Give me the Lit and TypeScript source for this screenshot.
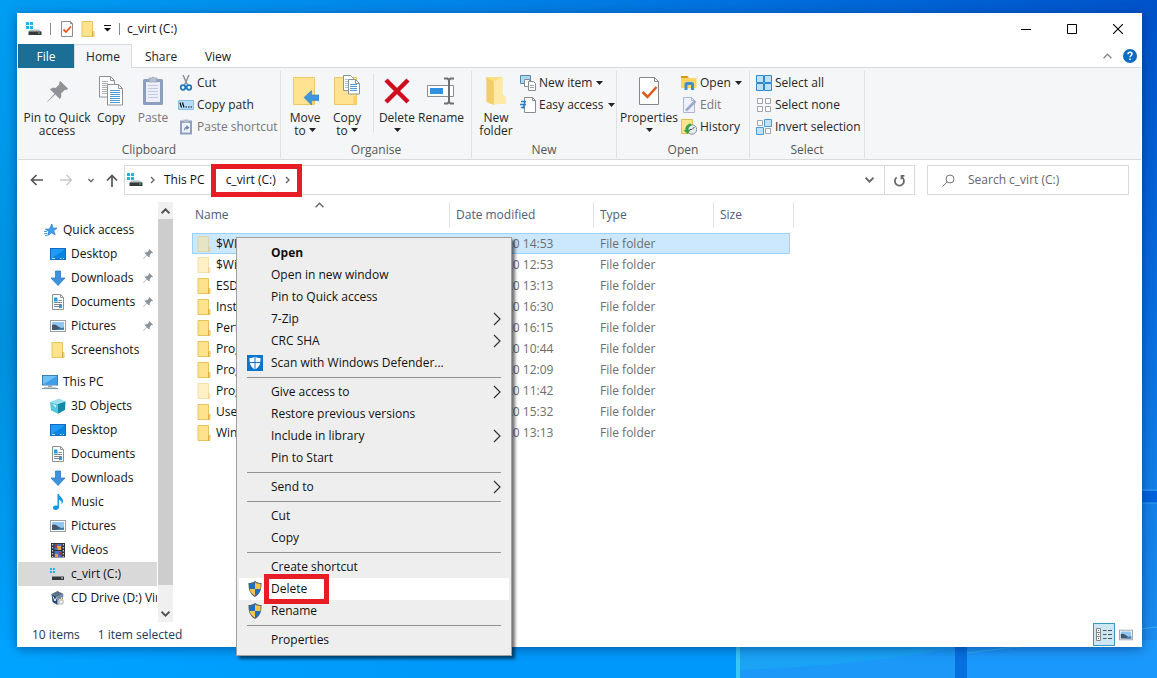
import { LitElement, html, css, svg, nothing, TemplateResult } from "lit";
import { customElement, property } from "lit/decorators.js";
import { classMap } from "lit/directives/class-map.js";

const winDots = (x: number, y: number, s: number) => svg`
  <path fill="#1fb3e6" d="M${x} ${y}h${s}v${s}h-${s}zM${x + s + 1} ${y}h${s}v${s}h-${s}zM${x} ${y + s + 1}h${s}v${s}h-${s}zM${x + s + 1} ${y + s + 1}h${s}v${s}h-${s}z"/>`;

const folderShape = svg`
  <path d="M2 .5h10.500v10H14v5H2z" fill="#ffe38c" stroke="#e8c35c"/>
  <path d="M12.500 10.500v5" stroke="#d9ab3c"/>`;

const pinShape = svg`<path d="M9.800 1.200 14.800 6.200 13.600 7 12.700 6.800 10.300 9.200C10.700 10.800 10.300 12 9.500 12.800L6.600 9.900 2 14.300 1.300 14.700 1.700 14 6.100 9.400 3.200 6.500C4 5.700 5.200 5.300 6.800 5.700L9.200 3.300 9 2.400z"/>`;

const sheetText = (x: number, y: number, w: number, n: number, c: string) =>
  svg`${Array.from({ length: n }, (_, i) => svg`<path d="M${x} ${y + i * 2}h${w}" stroke=${c}/>`)}`;

const desktopShape = svg`
  <rect x=".5" y="2.500" width="15" height="11" fill="#1e9bf2" stroke="#0f6cbd"/>
  <path d="M1 13 15 3v10z" fill="#0a84e0"/><path d="M2 12.500h3M10 12.500h1.500M13 12.500h1" stroke="#bfe3ff"/>`;

const icons: Record<string, { box: string; art: TemplateResult<2> }> = {
  drive: {
    box: "0 0 16 16",
    art: svg`${winDots(0, 1, 3)}
      <path d="M4 8.500h9l2.500 2.500H2.500z" fill="#b9bdc0"/><path d="M2.500 10.500h13v3.500h-13z" fill="#34393d"/>
      <path d="M12 12h2" stroke="#49d06c"/>`,
  },
  driveDark: {
    box: "0 0 16 16",
    art: svg`${winDots(0, 2, 2)}<path d="M2 10.500h12v3.500H2z" fill="#34393d"/><path d="M11 12h2" stroke="#dfe3e5"/>`,
  },
  check: {
    box: "0 0 14 16",
    art: svg`<path d="M1.500.5h9l2 2v13h-11z" fill="#fff" stroke="#8c8c8c"/><path d="M10.500.5v2h2" fill="none" stroke="#8c8c8c"/>
      <path d="M3.500 8.500 6 11l5-5.500" fill="none" stroke="#e2581b" stroke-width="1.800"/>`,
  },
  folder: { box: "0 0 16 16", art: folderShape },
  caret: { box: "0 0 7 4", art: svg`<path d="M0 0h7L3.500 4z" fill="#222"/>` },
  customize: { box: "0 0 7 7", art: svg`<path d="M0 .5h7" stroke="#111"/><path d="M0 3h7L3.500 6.500z" fill="#111"/>` },
  min: { box: "0 0 10 10", art: svg`<path d="M0 5.500h10" stroke="#000"/>` },
  max: { box: "0 0 10 10", art: svg`<path d="M.5.5h9v9h-9z" fill="none" stroke="#000"/>` },
  close: { box: "0 0 10 10", art: svg`<path d="M0 0l10 10M10 0 0 10" stroke="#000" stroke-width="1.100"/>` },
  chevUp: { box: "0 0 8 5", art: svg`<path d="M.5 4.500 4 1l3.500 3.500" fill="none" stroke="currentColor" stroke-width="1.200"/>` },
  chevDown: { box: "0 0 8 5", art: svg`<path d="M.5.5 4 4 7.500.5" fill="none" stroke="currentColor" stroke-width="1.600"/>` },
  scrollUp: { box: "0 0 8 5", art: svg`<path d="M.5 4.500 4 1l3.500 3.500" fill="none" stroke="currentColor" stroke-width="1.800"/>` },
  chevRight: { box: "0 0 5 8", art: svg`<path d="M1 1l3 3-3 3" fill="none" stroke="currentColor" stroke-width="1.400"/>` },
  subMenu: { box: "0 0 8 14", art: svg`<path d="M1 1l6 6-6 6" fill="none" stroke="#333" stroke-width="1.200"/>` },
  help: {
    box: "0 0 14 14",
    art: svg`<circle cx="7" cy="7" r="7" fill="#0b6cc4"/><path d="M5 5.300C5 3.800 6 3.300 7 3.300s2 .6 2 1.700C9 6.500 7 6.500 7 8.300" fill="none" stroke="#fff" stroke-width="1.500"/><path d="M6.200 9.500h1.600v1.500H6.200z" fill="#fff"/>`,
  },
  pin: { box: "0 0 16 16", art: svg`<g fill="#8f9499">${pinShape}</g>` },
  star: {
    box: "0 0 16 16",
    art: svg`<path d="M9.800 2 11 6.200l4-.2-3.300 2.800 1.500 4.200-3.700-2.300L5.800 13.500l1-4L3.500 7.200l4-.2z" fill="#3f9fe8" stroke="#1d78c9" stroke-width=".7"/>
      <path d="M2 9.500h3M2 11.500h3.500M3 13.500h2.500" stroke="#3f9fe8"/>`,
  },
  desktop: { box: "0 0 16 16", art: desktopShape },
  downloads: { box: "0 0 16 16", art: svg`<path d="M5.500 1h5v7h4.500l-7 7.500L1 8h4.500z" fill="#3f93dc" stroke="#2b7cc6" stroke-width=".8"/>` },
  documents: {
    box: "0 0 16 16",
    art: svg`<path d="M2.500.5h8l3 3v12h-11z" fill="#fff" stroke="#8b9094"/><path d="M10.500.5v3h3" fill="none" stroke="#8b9094"/>
      <path d="M4 8.500h8M4 10.500h8M4 12.500h8M8.500 6.500H12" stroke="#7c8a94"/><path d="M4 3.500h3.500v4H4zM9 11h3v3H9z" fill="#2f97dd"/>`,
  },
  pictures: {
    box: "0 0 16 16",
    art: svg`<rect x=".5" y="2.500" width="15" height="11" fill="#fff" stroke="#9a9ea2"/><path d="M2 4h12v8H2z" fill="#8fc7f0"/>
      <path d="M2 7c3-1.500 5 .5 7 2s4 1 5 .5V12H2z" fill="#40596e"/><path d="M7 12c2-2 5-2 7-1.500V12z" fill="#3f86c0"/>`,
  },
  pc: {
    box: "0 0 16 16",
    art: svg`<rect x=".5" y="1.500" width="15" height="9.500" fill="#6fc0f5" stroke="#3c7fb4"/><path d="M1 10.500 15 2v8.500z" fill="#3fa0e8"/>
      <path d="M6 11.500h4v1.500H6z" fill="#9aa5ad"/><path d="M0 14.500h16" stroke="#7a99ad"/><path d="M2 13.500h12" stroke="#c4ced5"/>`,
  },
  cube: {
    box: "0 0 16 16",
    art: svg`<path d="M0 4 9 .5l6.500 3L8 6z" fill="#9be0ee"/><path d="M0 4l8 2v9.800L1 12.500z" fill="#58c6dc"/><path d="M8 6l7.500-2.500-.5 8.500-7 3.800z" fill="#1389a8"/>
      <path d="M2 6l4 1v3z" fill="#c9f1f7"/>`,
  },
  music: { box: "0 0 16 16", art: svg`<path d="M7.500 0h1.500c.3 3 4 3.500 4 7 0 1.500-.7 2.600-1.500 3.500.8-3-.8-4.200-2.500-4.700V13c0 1.700-1.500 3-3.300 3S3 15 3 13.700C3 12 5.500 11 7.500 12z" fill="#1795e0"/>` },
  videos: {
    box: "0 0 16 16",
    art: svg`<path d="M1 1h14v14.500H1z" fill="#2d3238"/><path d="M4.500 2h7v6h-7z" fill="#4a72c9"/><path d="M4.500 9h7v6h-7z" fill="#4a72c9"/>
      <path d="M7 4h4v4H8zM5 12h3v3H5z" fill="#e5a53d"/><path d="M5 2h2v4H5zM9 10h2v3H9z" fill="#a43a3a"/>
      <path d="M2.700 2v13M13.300 2v13" stroke="#e9edf0" stroke-dasharray="1.500 1.500"/>`,
  },
  vbox: {
    box: "0 0 16 16",
    art: svg`<path d="M1.500 4 7.500 1l6 3-6 3z" fill="#5b6f86"/><path d="M1.500 4l6 3v8L2.500 12z" fill="#2a4a7c"/><path d="M13.500 4 7.500 7v8l5-3z" fill="#7188a6"/>
      <path d="M3 6.500 5 11l1.500-3.500" fill="none" stroke="#fff"/><path d="M9 8.500l1.500 3 1.500-4.500" fill="none" stroke="#dfe8f2"/><circle cx="11" cy="12" r="3" fill="#c9ced3"/><circle cx="11" cy="12" r="1" fill="#fff"/><path d="M10 9.500 13 9v2z" fill="#f0c646"/>`,
  },
  back: { box: "0 0 14 12", art: svg`<path d="M6.500 1l-5 5 5 5M1.500 6H13" fill="none" stroke="currentColor" stroke-width="1.700"/>` },
  forward: { box: "0 0 14 12", art: svg`<path d="M7.500 1l5 5-5 5M12.500 6H1" fill="none" stroke="currentColor" stroke-width="1.400"/>` },
  up: { box: "0 0 12 13", art: svg`<path d="M1 6.500l5-5 5 5M6 1.500V13" fill="none" stroke="currentColor" stroke-width="1.700"/>` },
  refresh: { box: "0 0 12 12", art: svg`<path d="M8.300 3A4.200 4.200 0 1 1 3.400 3.100" fill="none" stroke="#666" stroke-width="1.600"/><path d="M3 .5 3.500 4H7" fill="none" stroke="#666" stroke-width="0"/><path d="M10.500 1.700H7.800v3.200" fill="none" stroke="#666" stroke-width="1.500"/>` },
  search: { box: "0 0 13 13", art: svg`<circle cx="8" cy="5" r="4" fill="none" stroke="#777"/><path d="M5.200 7.900.5 12.500" stroke="#777"/>` },
  bigPin: { box: "0 0 16 16", art: svg`<g fill="#8f9397">${pinShape}</g>` },
  bigCopy: {
    box: "0 0 26 30",
    art: svg`<path d="M1.500.5h11l4 4v16.500h-15z" fill="#fff" stroke="#8e9296"/><path d="M12.500.5v4h4" fill="none" stroke="#8e9296"/>
      ${sheetText(4, 5.5, 6, 7, "#aab2b8")}
      <path d="M9.500 8.500h11l4 4v16.500h-15z" fill="#fff" stroke="#8e9296"/><path d="M20.500 8.500v4h4" fill="none" stroke="#8e9296"/>
      ${sheetText(12, 14.5, 10, 7, "#4a9ada")}`,
  },
  bigPaste: {
    box: "0 0 22 30",
    art: svg`<rect x="1" y="3" width="20" height="26" rx="1.500" fill="#8c9dc0"/><path d="M4 6h14v20H4z" fill="#eceff8"/>
      <path d="M7 2h2.500a1.700 1.700 0 0 1 3 0H15v4H7z" fill="#b5bfcd" stroke="#8d99ad" stroke-width=".6"/>
      ${[9.5, 12.5, 15.5, 18.5, 21.5].map((y) => svg`<path d="M6 ${y}h10" stroke="#c3cbe3"/>`)}`,
  },
  cut: {
    box: "0 0 16 16",
    art: svg`<path d="M5 0 9.500 10M11 0 6.500 10" stroke="#8d9398" stroke-width="1.500"/><circle cx="5" cy="12.500" r="2.300" fill="none" stroke="#1976bf" stroke-width="1.700"/><circle cx="11" cy="12.500" r="2.300" fill="none" stroke="#1976bf" stroke-width="1.700"/>`,
  },
  copyPath: {
    box: "0 0 16 16",
    art: svg`<path d="M.5 3.500h15v9H.5z" fill="#b6dcf7" stroke="#87bfe6"/><path d="M2 5.500 3.500 10.500M4.500 5.500 6 10.500" stroke="#111" stroke-width="1.200"/><path d="M7.500 10h1.500M10 10h1.500M12.500 10H14" stroke="#111" stroke-width="1.200"/>`,
  },
  pasteShortcut: {
    box: "0 0 16 16",
    art: svg`<rect x="2" y="1.500" width="12" height="14" fill="#91a0c0"/><path d="M4 4h8v9.500H4z" fill="#eef0f8"/><path d="M5.500.5h5v3h-5z" fill="#b2bccd"/><path d="M6 12c0-3 1-4 2.500-4.500V6l3 2.700L8.500 11V9.500C7.500 9.800 7 10.500 6 12z" fill="#7383aa"/>`,
  },
  moveTo: {
    box: "0 0 28 32",
    art: svg`<path d="M2.500 2.500h21v27h-21z" fill="#ffe390" stroke="#ecc863"/><path d="M21 21v8.500h2.500V21z" fill="#f6cf66"/>
      <path d="M13 22.500 20.500 15.500V20H28v5.500h-7.500V30z" fill="#3f96dd" stroke="#2c80c8" stroke-width=".6"/>`,
  },
  copyTo: {
    box: "0 0 28 32",
    art: svg`<path d="M1.500 2.500h22v27h-22z" fill="#ffe390" stroke="#ecc863"/><path d="M20.500 21v8.500H24V21z" fill="#f6cf66"/>
      <path d="M10.500.5h7l3 3v12h-10z" fill="#fff" stroke="#8e9296"/><path d="M15.500 4.500h7l4 4v10.500h-11z" fill="#fff" stroke="#8e9296"/><path d="M22.500 4.500v4h4" fill="none" stroke="#8e9296"/>
      ${sheetText(12, 4.500, 3, 5, "#9cc6ea")}${sheetText(17, 9.500, 7, 4, "#4a9ada")}`,
  },
  deleteX: { box: "0 0 28 28", art: svg`<path d="M3 3 25 25M25 3 3 25" stroke="#d00d1c" stroke-width="4.500"/>` },
  rename: {
    box: "0 0 28 28",
    art: svg`<path d="M.5 8.500h26v11H.5z" fill="#fff" stroke="#8b8f93"/><path d="M3 11h13v6H3z" fill="#3191df"/>
      <path d="M17 1.500h3.500L22 3l1.500-1.500H27M17 26.500h3.500L22 25l1.500 1.500H27M22 3v22" fill="none" stroke="#6e7275" stroke-width="2"/>`,
  },
  newFolder: {
    box: "0 0 20 28",
    art: svg`<path d="M1 1h15v16l3 3v6H4z" fill="#ffdf86"/><path d="M1 1l7 4v22l-7-3z" fill="#f4cd6b"/><path d="M8 5l8-4v16l3 3v5l-11 2z" fill="#ffe9a6"/>`,
  },
  newItem: {
    box: "0 0 16 16",
    art: svg`<path d="M.5.5h10v8H.5z" fill="#a9d8f5" stroke="#5b86a6"/><path d="M4.500 4.500h5v7h-5z" fill="#fff" stroke="#888c90"/><path d="M8.500 6.500h5l2 2v7h-7z" fill="#fff" stroke="#888c90"/><path d="M10 10.500h4M10 12.500h4" stroke="#9aa"/>`,
  },
  easyAccess: {
    box: "0 0 16 16",
    art: svg`<path d="M4.500.5h8l3 3v12h-11z" fill="#fff" stroke="#888c90"/><path d="M12.500.5v3h3" fill="none" stroke="#888c90"/><path d="M1 4.500h5M0 7.500h6M1 10.500h4M5 4.500l-2 7" stroke="#2b7fc6" stroke-width="1.300"/>`,
  },
  properties: {
    box: "0 0 22 30",
    art: svg`<path d="M1.500 1.500h15l4 4v23h-19z" fill="#fff" stroke="#85898c"/><path d="M16.500 1.500v4h4" fill="none" stroke="#85898c"/><path d="M4.500 16l5 5 9-10" fill="none" stroke="#e2581b" stroke-width="2.500"/>`,
  },
  openFolder: {
    box: "0 0 16 16",
    art: svg`<path d="M0 1h7l1 2h7.500v10H0z" fill="#ffd465"/><path d="M0 1h6.500l1 2H0z" fill="#d59a17"/><path d="M3.500 15V9.500A2.500 2.500 0 0 1 6 7h4.500A2.500 2.500 0 0 1 13 9.500V15h-3v-5H6.500v5z" fill="#3a8fd6"/>`,
  },
  edit: {
    box: "0 0 16 16",
    art: svg`<path d="M2.500.5h8l3 3v12h-11z" fill="#eef1fa" stroke="#aab6d2"/><path d="M10.500.5v3h3" fill="none" stroke="#aab6d2"/><path d="M5 13.500 14.500 4" stroke="#9aa9cb" stroke-width="2.500"/>`,
  },
  history: {
    box: "0 0 16 16",
    art: svg`<path d="M.5.500h11v14H.5z" fill="#ffe390" stroke="#e3be57"/><circle cx="11" cy="10.500" r="4.700" fill="#e6ebee" stroke="#8b9297"/><path d="M11 10.500 13.500 8M11 10.500H8.500" stroke="#555"/><path d="M10 4.500C6 5 4 8 4.500 11H2.500l4 4 3-4h-2c0-2 .7-3.500 3-4.500z" fill="#35a24c"/>`,
  },
  selectAll: { box: "0 0 16 16", art: svg`<path d="M.5.5h7v7h-7zM8.500.5h7v7h-7zM.5 8.500h7v7h-7zM8.500 8.500h7v7h-7z" fill="#bfe2fa" stroke="#2f88cc"/>` },
  selectNone: { box: "0 0 16 16", art: svg`<path d="M1.500 1.500h5v5h-5zM9.500 1.500h5v5h-5zM1.500 9.500h5v5h-5zM9.500 9.500h5v5h-5z" fill="#fff" stroke="#a0a4a8"/>` },
  invert: {
    box: "0 0 16 16",
    art: svg`<path d="M1.500 1.500h5v5h-5zM9.500 9.500h5v5h-5z" fill="#fff" stroke="#a0a4a8"/><path d="M8.500.5h7v7h-7zM.5 8.500h7v7h-7z" fill="#bfe2fa" stroke="#4a9ada"/>`,
  },
  defender: {
    box: "0 0 16 16",
    art: svg`<path d="M0 0h16v16H0z" fill="#0a74cf"/><path d="M8 1.500c1.500 1.200 3.500 1.500 5.500 1.500 0 5-.5 9-5.500 11.500C3 12 2.500 8 2.500 3 4.500 3 6.500 2.700 8 1.500z" fill="#fff"/><path d="M8 1v14M2 7.500h12" stroke="#0a74cf"/>`,
  },
  shield: {
    box: "0 0 16 16",
    art: svg`<path d="M8 0c2 1.500 4 2 6.500 2 0 6-.7 10.500-6.500 14C2.200 12.500 1.500 8 1.500 2 4 2 6 1.500 8 0z" fill="#50606e"/>
      <path d="M8 1.500V8H2.600C2.400 6.300 2.400 4.700 2.400 3 4.500 2.900 6.300 2.500 8 1.500z" fill="#1f6fc0"/><path d="M8 1.500V8h5.400c.2-1.700.2-3.300.2-5C11.500 2.900 9.700 2.500 8 1.500z" fill="#f6c64a"/>
      <path d="M8 8v6.800C4.800 12.700 3.200 11 2.600 8z" fill="#f6c64a"/><path d="M8 8v6.800c3.200-2.100 4.800-3.800 5.400-6.800z" fill="#1f6fc0"/>`,
  },
  details: {
    box: "0 0 16 13",
    art: svg`<path d="M.5.5h4v12h-4zM.5 4.500h4M.5 8.500h4" fill="#fff" stroke="#858585"/><path d="M2 2.500h1M2 6.500h1M2 10.500h1M7 2.500h3.500M12 2.500h4M7 6.500h3.500M12 6.500h4M7 10.500h3.500M12 10.500h4" stroke="#555"/>`,
  },
};

@customElement("fx-icon")
class FxIcon extends LitElement {
  @property() name = "";
  static styles = css`
    :host { display: inline-flex; flex: none; width: 16px; height: 16px; align-items: center; justify-content: center; }
    svg { display: block; width: 100%; height: 100%; }
  `;
  render() {
    const icon = icons[this.name];
    return icon ? html`<svg viewBox=${icon.box} aria-hidden="true">${icon.art}</svg>` : nothing;
  }
}

type NavEntry = { label: string; icon: string; level?: number; pinned?: boolean; selected?: boolean; gap?: boolean };
const nav: NavEntry[] = [
  { label: "Quick access", icon: "star", level: 0 },
  { label: "Desktop", icon: "desktop", pinned: true },
  { label: "Downloads", icon: "downloads", pinned: true },
  { label: "Documents", icon: "documents", pinned: true },
  { label: "Pictures", icon: "pictures", pinned: true },
  { label: "Screenshots", icon: "folder" },
  { label: "This PC", icon: "pc", level: 0, gap: true },
  { label: "3D Objects", icon: "cube" },
  { label: "Desktop", icon: "desktop" },
  { label: "Documents", icon: "documents" },
  { label: "Downloads", icon: "downloads" },
  { label: "Music", icon: "music" },
  { label: "Pictures", icon: "pictures" },
  { label: "Videos", icon: "videos" },
  { label: "c_virt (C:)", icon: "driveDark", selected: true },
  { label: "CD Drive (D:) VirtualBox", icon: "vbox" },
];

const files = [
  { name: "$WINDOWS.~BT", date: "15/07/2020 14:53", faded: true, selected: true },
  { name: "$WinREAgent", date: "15/07/2020 12:53", faded: true },
  { name: "ESD", date: "14/07/2020 13:13" },
  { name: "Install", date: "14/07/2020 16:30" },
  { name: "PerfLogs", date: "14/07/2020 16:15" },
  { name: "Program Files", date: "15/07/2020 10:44" },
  { name: "Program Files (x86)", date: "15/07/2020 12:09" },
  { name: "ProgramData", date: "15/07/2020 11:42", faded: true },
  { name: "Users", date: "14/07/2020 15:32" },
  { name: "Windows", date: "15/07/2020 13:13" },
];

type MenuEntry = { label: string; icon?: string; sub?: boolean; bold?: boolean; hot?: boolean } | null;
const menu: MenuEntry[] = [
  { label: "Open", bold: true },
  { label: "Open in new window" },
  { label: "Pin to Quick access" },
  { label: "7-Zip", sub: true },
  { label: "CRC SHA", sub: true },
  { label: "Scan with Windows Defender...", icon: "defender" },
  null,
  { label: "Give access to", sub: true },
  { label: "Restore previous versions" },
  { label: "Include in library", sub: true },
  { label: "Pin to Start" },
  null,
  { label: "Send to", sub: true },
  null,
  { label: "Cut" },
  { label: "Copy" },
  null,
  { label: "Create shortcut" },
  { label: "Delete", icon: "shield", hot: true },
  { label: "Rename", icon: "shield" },
  null,
  { label: "Properties" },
];

@customElement("app-root")
class AppRoot extends LitElement {
  static styles = css`
    :host {
      display: flex; position: relative; box-sizing: border-box; height: 100vh; min-height: 400px;
      padding: 13px 15px 31px 17px; overflow: hidden; background: #0a86ec;
      font: 12px/16px "Open Sans", "Noto Sans", sans-serif; color: #111;
    }
    * { box-sizing: border-box; }
    button, input { font: inherit; color: inherit; border: 0; padding: 0; margin: 0; background: none; }
    button { white-space: nowrap; }
    ul { list-style: none; margin: 0; padding: 0; }
    a { color: inherit; text-decoration: none; }

    .wallpaper { position: absolute; inset: 0; width: 100%; height: 100%; }
    .window {
      position: relative; flex: 1; min-width: 0; display: flex; flex-direction: column;
      background: #fff; box-shadow: 0 2px 10px rgba(0, 20, 70, .45); padding: 0 1px;
    }

    .titlebar { display: flex; align-items: center; height: 31px; padding-left: 8px; }
    .titlebar .sep { width: 1px; height: 12px; background: #888; }
    .titlebar .quick { display: flex; align-items: center; margin: 0 8px 0 9px; gap: 6px; }
    .titlebar .sep.first { margin-left: 8px; }
    .customize { width: 7px; height: 7px; margin-left: 2px; }
    .check { width: 14px; }
    h1 { font: inherit; margin: 0 0 0 7px; }
    .caption { display: flex; margin-left: auto; }
    .caption button { width: 46px; height: 31px; display: flex; align-items: center; justify-content: center; }
    .caption fx-icon { width: 10px; height: 10px; }

    .tabs { display: flex; align-items: stretch; height: 24px; border-bottom: 1px solid #dadbdc; }
    .tab { width: 56px; height: 24px; color: #222; border: 1px solid transparent; border-bottom: 0; }
    .tab.file { background: #1b6e96; color: #fff; }
    .tab.on { width: 58px; background: #f5f6f7; border-color: #dadbdc; }
    .tab.share { width: 58px; }
    .tools { display: flex; align-items: center; margin-left: auto; gap: 11px; padding-right: 4px; color: #888; }
    .tools fx-icon { width: 9px; height: 6px; }
    .tools .help fx-icon { width: 14px; height: 14px; }
    .tools button { display: flex; }

    .ribbon {
      display: grid; grid-template-columns: 263px 191px 145px 133px 115px; height: 92px;
      background: #f5f6f7; border-bottom: 1px solid #dadbdc; color: #262626; padding: 3px 0 1px;
    }
    .group { display: flex; flex-direction: column; justify-content: space-between; border-right: 1px solid #dfe0e1; min-width: 0; }
    .group h2 { font: inherit; margin: 0; text-align: center; color: #555; }
    .cmds { display: flex; align-items: flex-start; }
    .clip { padding-left: 2px; }
    .select { padding-left: 6px; }
    .big { display: flex; flex: none; flex-direction: column; align-items: center; line-height: 13px; height: 69px; width: 46px; }
    .w74 { width: 74px; }
    .w64 { width: 64px; }
    .w50 { width: 50px; }
    .w48 { width: 48px; }
    .w42 { width: 42px; }
    .w36 { width: 36px; }
    .w34 { width: 34px; }
    .big .pic { height: 38px; display: flex; align-items: center; padding-top: 2px; }
    .big fx-icon { width: 26px; height: 30px; }
    .big .pin { width: 25px; height: 25px; }
    .big .square { width: 28px; height: 28px; }
    .big .tall { width: 28px; height: 32px; }
    .big .pic + span { white-space: pre-line; margin-top: 2px; }
    .big .drop, .small .drop { width: 7px; height: 4px; }
    .big .drop { margin-top: 4px; vertical-align: 3px; }
    .stack { display: flex; flex-direction: column; padding-top: 1px; }
    .small { display: flex; align-items: center; gap: 3px; height: 22px; }
    .small .drop { margin-left: 1px; }
    .off { color: #777; }
    .rule { width: 1px; height: 58px; background: #dfe0e1; margin: 3px 2px 0 8px; }

    .addressbar { display: flex; align-items: center; height: 40px; padding: 0 12px; color: #555; }
    .arrow { width: 14px; height: 12px; }
    .arrow.up { width: 12px; height: 13px; }
    .arrows { display: flex; align-items: center; gap: 15px; margin-right: 6px; }
    .arrows button { display: flex; }
    .arrows .recent fx-icon { width: 6px; height: 5px; }
    .arrows .fwd { color: #c9c9c9; }
    .arrows .recent { margin-right: -3px; }
    .path { flex: 1; display: flex; align-items: center; height: 30px; border: 1px solid #d9d9d9; padding-left: 2px; color: #111; min-width: 0; }
    .chev { width: 5px; height: 8px; color: #666; margin-left: 7px; }
    .path a { padding-left: 9px; }
    .crumb { display: flex; align-items: center; height: 23px; outline: 5px solid #e81c24; margin-left: 11px; padding-right: 7px; }
    .crumb a { padding-left: 10px; }
    .path .end { display: flex; margin-left: auto; height: 28px; }
    .crumb .chev { margin-left: 9px; }
    .path .end button { width: 30px; display: flex; align-items: center; justify-content: center; color: #666; }
    .path .end button + button { border-left: 1px solid #d9d9d9; }
    .path .end .dd { width: 9px; height: 6px; }
    .path .end .rf { width: 13px; height: 13px; }
    .search { width: 202px; height: 30px; display: flex; align-items: center; border: 1px solid #d9d9d9; margin-left: 12px; padding-left: 14px; gap: 13px; }
    .search fx-icon { width: 13px; height: 13px; }
    .search input { flex: 1; min-width: 0; outline: none; }
    .search input::placeholder { color: #666; opacity: 1; }

    .body { flex: 1; min-height: 0; display: flex; }
    .nav { width: 139px; overflow: hidden; padding-top: 18px; }
    .nav a { display: flex; align-items: center; gap: 5px; height: 24px; padding-left: 32px; white-space: nowrap; overflow: hidden; }
    .nav .root a { padding-left: 24px; }
    .nav .gap { margin-top: 8px; }
    .nav .selected { background: #d9d9d9; }
    .nav .pinned { width: 12px; height: 12px; margin: 0 3px 0 auto; }
    .bar { width: 15px; margin: 2px 0 0 1px; display: flex; flex-direction: column; background: #f0f0f0; color: #505050; }
    .bar button { height: 17px; display: flex; align-items: center; justify-content: center; }
    .bar button fx-icon { width: 9px; height: 6px; }
    .thumb { flex: 1; background: #cdcdcd; margin-bottom: 20px; }
    .list { flex: 1; min-width: 0; padding-left: 19px; overflow: hidden; }

    table { table-layout: fixed; width: 598px; border-collapse: separate; border-spacing: 0; }
    th { position: relative; height: 28px; font-weight: 400; text-align: left; color: #4c607a; padding: 2px 6px 0; }
    th::after { content: ""; position: absolute; right: 0; top: 2px; bottom: 0; width: 1px; background: #e2e2e2; }
    th:first-child { padding-left: 3px; }
    th:last-child::after { right: -4px; }
    th .sort { position: absolute; left: 123px; top: 2px; width: 9px; height: 6px; color: #666; }
    .colName { width: 258px; } .colDate { width: 144px; } .colType { width: 120px; } .colSize { width: 76px; }
    tbody::before { content: ""; display: block; height: 5px; }
    td { height: 21px; padding: 0 6px; color: #6d6d6d; white-space: nowrap; overflow: hidden; }
    td:first-child { padding-left: 4px; }
    .cell { display: flex; align-items: center; gap: 4px; color: #111; }
    .faded fx-icon { opacity: .5; }
    tr.selected td { background: #cce8ff; border: 1px solid #99d1ff; border-width: 1px 0; }
    tr.selected td:first-child { border-left-width: 1px; padding-left: 3px; }
    tr.selected td:last-child { border-right-width: 1px; }

    .status { display: flex; align-items: center; height: 25px; padding: 0 8px 0 14px; gap: 18px; color: #1e395b; }
    .views { display: flex; align-items: center; margin-left: auto; gap: 4px; }
    .views button { width: 22px; height: 23px; display: flex; align-items: center; justify-content: center; }
    .views button.on { background: #cde6f3; border: 1px solid #3399bd; }
    .views .on fx-icon { height: 13px; }
    .views .pics { width: 14px; }
    .views .pics fx-icon { width: 14px; height: 14px; }

    .menu {
      position: absolute; left: 236px; top: 237px; width: 276px; padding: 4px 2px;
      background: #eee; border: 1px solid #a0a0a0; box-shadow: 3px 3px 3px rgba(0, 0, 0, .55);
    }
    .menu button { display: flex; align-items: center; width: 100%; height: 22px; padding: 0 8px; gap: 8px; text-align: left; color: #111; }
    .menu .slot { width: 16px; height: 16px; }
    .menu .arrow { width: 8px; height: 14px; margin-left: auto; }
    .menu hr { border: 0; height: 1px; background: #919191; margin: 3px 8px; }
    .menu .bold { font-weight: 700; }
    .menu .hot { background: #fff; }
    .menu .hot .label { outline: 5px solid #e81c24; padding: 2px 17px 2px 2px; margin-left: -2px; }
  `;

  private big(label: string, icon: string, size = "", drop = "", iconClass = "", off = false) {
    return html`<button class="big ${size} ${off ? "off" : ""}">
      <span class="pic"><fx-icon class=${iconClass} name=${icon}></fx-icon></span>
      <span>${label}${drop === "inline" ? html` <fx-icon class="drop" name="caret"></fx-icon>` : nothing}</span>
      ${drop === "below" ? html`<fx-icon class="drop" name="caret"></fx-icon>` : nothing}
    </button>`;
  }

  private small(label: string, icon: string, drop = false, off = false) {
    return html`<button class=${classMap({ small: true, off })}>
      <fx-icon name=${icon}></fx-icon><span>${label}</span>
      ${drop ? html`<fx-icon class="drop" name="caret"></fx-icon>` : nothing}
    </button>`;
  }

  private wallpaper() {
    return html`<svg class="wallpaper" viewBox="0 0 1157 678" preserveAspectRatio="none" aria-hidden="true">
      <defs>
        <linearGradient id="top"><stop offset="0" stop-color="#009df2"/><stop offset=".45" stop-color="#0080e6"/><stop offset="1" stop-color="#0052c9"/></linearGradient>
        <linearGradient id="side" x2="0" y2="1"><stop offset="0" stop-color="#0052c9"/><stop offset=".5" stop-color="#0a70e0"/><stop offset="1" stop-color="#1c8ff0"/></linearGradient>
        <linearGradient id="left" x2="0" y2="1"><stop offset="0" stop-color="#009df2"/><stop offset=".5" stop-color="#0090dc"/><stop offset="1" stop-color="#00a2ff"/></linearGradient>
        <linearGradient id="base"><stop offset="0" stop-color="#00a4ff"/><stop offset=".63" stop-color="#0098fa"/></linearGradient>
      </defs>
      <path d="M0 0h1157v40H0z" fill="url(#top)"/>
      <path d="M0 13h40v665H0z" fill="url(#left)"/>
      <path d="M1120 13h37v665h-37z" fill="url(#side)"/>
      <path d="M0 640h740v38H0z" fill="url(#base)"/>
      <path d="M736 640h219v38H736z" fill="#1aa3f5"/><path d="M738 678v-8q120-4 217-22v30z" fill="#1b98f8"/>
      <path d="M967 640h190v38H967z" fill="#1b98fb"/>
      <path d="M955 640h12v38h-12z" fill="#0670df"/><path d="M736 640h4v38h-4z" fill="#37c6f5"/>
      <path d="M1130 491h27v12h-27z" fill="#0063dc"/><path d="M1130 490h27M1130 503h27" stroke="#35a2f5"/>
      <path d="M967 653q40-6 80-8" fill="none" stroke="#2fb1f2"/><path d="M1130 630l27-3" stroke="#37aef5"/>
    </svg>`;
  }

  render() {
    return html`
      ${this.wallpaper()}
      <main class="window">
        <header class="titlebar">
          <fx-icon name="drive"></fx-icon><span class="sep first"></span>
          <div class="quick">
            <fx-icon class="check" name="check"></fx-icon><fx-icon name="folder"></fx-icon>
            <fx-icon class="customize" name="customize"></fx-icon>
          </div>
          <span class="sep"></span>
          <h1>c_virt (C:)</h1>
          <div class="caption">
            <button aria-label="Minimise"><fx-icon name="min"></fx-icon></button>
            <button aria-label="Maximise"><fx-icon name="max"></fx-icon></button>
            <button aria-label="Close"><fx-icon name="close"></fx-icon></button>
          </div>
        </header>
        <nav class="tabs">
          <button class="tab file">File</button><button class="tab on">Home</button>
          <button class="tab share">Share</button><button class="tab">View</button>
          <div class="tools">
            <button aria-label="Collapse the ribbon"><fx-icon name="chevUp"></fx-icon></button>
            <button class="help" aria-label="Help"><fx-icon name="help"></fx-icon></button>
          </div>
        </nav>
        <section class="ribbon">
          <div class="group">
            <div class="cmds clip">
              ${this.big("Pin to Quick\naccess", "bigPin", "w74", "", "pin")}
              ${this.big("Copy", "bigCopy", "w34")}
              ${this.big("Paste", "bigPaste", "w50", "", "", true)}
              <div class="stack">
                ${this.small("Cut", "cut")}${this.small("Copy path", "copyPath")}
                ${this.small("Paste shortcut", "pasteShortcut", false, true)}
              </div>
            </div>
            <h2>Clipboard</h2>
          </div>
          <div class="group">
            <div class="cmds">
              ${this.big("Move\nto", "moveTo", "w48", "inline", "tall")}
              ${this.big("Copy\nto", "copyTo", "w36", "inline", "tall")}
              <span class="rule"></span>
              ${this.big("Delete", "deleteX", "w42", "below", "square")}
              ${this.big("Rename", "rename", "", "", "square")}
            </div>
            <h2>Organise</h2>
          </div>
          <div class="group">
            <div class="cmds">
              ${this.big("New\nfolder", "newFolder", "w48")}
              <div class="stack">
                ${this.small("New item", "newItem", true)}${this.small("Easy access", "easyAccess", true)}
              </div>
            </div>
            <h2>New</h2>
          </div>
          <div class="group">
            <div class="cmds">
              ${this.big("Properties", "properties", "w64", "below")}
              <div class="stack">
                ${this.small("Open", "openFolder", true)}${this.small("Edit", "edit", false, true)}${this.small("History", "history")}
              </div>
            </div>
            <h2>Open</h2>
          </div>
          <div class="group">
            <div class="cmds select">
              <div class="stack">
                ${this.small("Select all", "selectAll")}${this.small("Select none", "selectNone")}${this.small("Invert selection", "invert")}
              </div>
            </div>
            <h2>Select</h2>
          </div>
        </section>
        <div class="addressbar">
          <div class="arrows">
            <button aria-label="Back"><fx-icon class="arrow" name="back"></fx-icon></button>
            <button class="fwd" aria-label="Forward"><fx-icon class="arrow" name="forward"></fx-icon></button>
            <button class="recent" aria-label="Recent locations"><fx-icon name="chevDown"></fx-icon></button>
            <button aria-label="Up"><fx-icon class="arrow up" name="up"></fx-icon></button>
          </div>
          <div class="path">
            <fx-icon name="drive"></fx-icon><fx-icon class="chev" name="chevRight"></fx-icon>
            <a href="#pc">This PC</a>
            <span class="crumb"><a href="#c">c_virt (C:)</a><fx-icon class="chev" name="chevRight"></fx-icon></span>
            <div class="end">
              <button aria-label="Previous locations"><fx-icon class="dd" name="chevDown"></fx-icon></button>
              <button aria-label="Refresh"><fx-icon class="rf" name="refresh"></fx-icon></button>
            </div>
          </div>
          <label class="search"><fx-icon name="search"></fx-icon><input type="text" aria-label="Search" placeholder="Search c_virt (C:)" /></label>
        </div>
        <div class="body">
          <nav class="nav">
            <ul>
              ${nav.map((n) => html`<li class=${classMap({ root: n.level === 0, gap: !!n.gap, selected: !!n.selected })}>
                <a href="#"><fx-icon name=${n.icon}></fx-icon><span>${n.label}</span>${n.pinned ? html`<fx-icon class="pinned" name="pin"></fx-icon>` : nothing}</a>
              </li>`)}
            </ul>
          </nav>
          <div class="bar">
            <button aria-label="Scroll up"><fx-icon name="scrollUp"></fx-icon></button>
            <div class="thumb"></div>
            <button aria-label="Scroll down"><fx-icon name="chevDown"></fx-icon></button>
          </div>
          <div class="list">
            <table>
              <thead><tr>
                <th class="colName">Name<fx-icon class="sort" name="chevUp"></fx-icon></th><th class="colDate">Date modified</th>
                <th class="colType">Type</th><th class="colSize">Size</th>
              </tr></thead>
              <tbody>
                ${files.map((f) => html`<tr class=${classMap({ faded: !!f.faded, selected: !!f.selected })}>
                  <td><span class="cell"><fx-icon name="folder"></fx-icon>${f.name}</span></td>
                  <td>${f.date}</td><td>File folder</td><td></td>
                </tr>`)}
              </tbody>
            </table>
          </div>
        </div>
        <footer class="status">
          <span>10 items</span><span>1 item selected</span>
          <div class="views">
            <button class="on" aria-label="Details"><fx-icon name="details"></fx-icon></button>
            <button class="pics" aria-label="Large icons"><fx-icon name="pictures"></fx-icon></button>
          </div>
        </footer>
      </main>
      <div class="menu" role="menu">
        ${menu.map((m) => m === null ? html`<hr />` : html`<button role="menuitem" class=${classMap({ bold: !!m.bold, hot: !!m.hot })}>
          <fx-icon class="slot" name=${m.icon ?? ""}></fx-icon><span class="label">${m.label}</span>
          ${m.sub ? html`<fx-icon class="arrow" name="subMenu"></fx-icon>` : nothing}
        </button>`)}
      </div>
    `;
  }
}
